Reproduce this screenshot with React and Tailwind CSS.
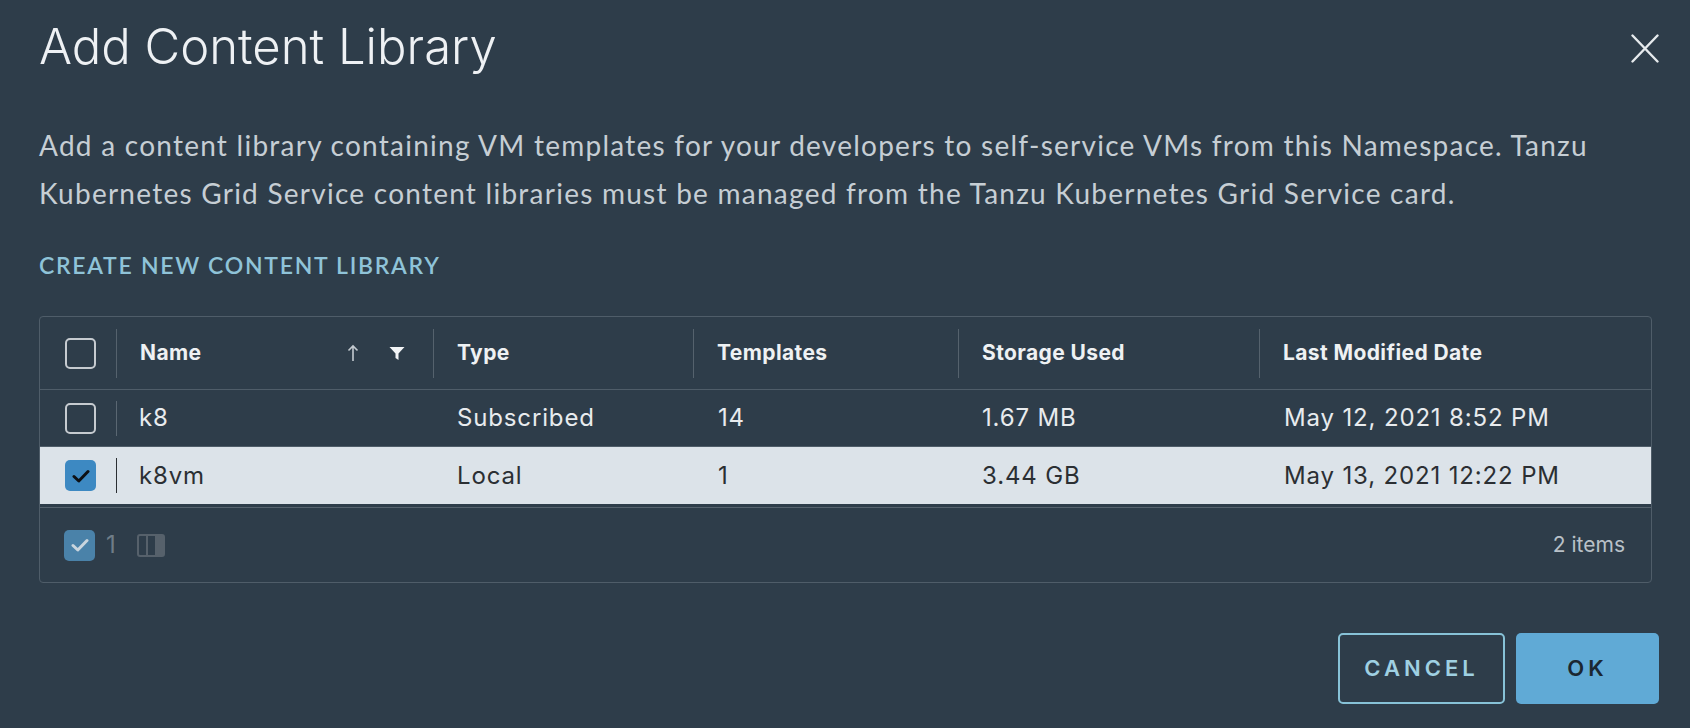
import React from "react";

const rows = [
  { name: "k8", type: "Subscribed", templates: "14", storage: "1.67 MB", modified: "May 12, 2021 8:52 PM", selected: false },
  { name: "k8vm", type: "Local", templates: "1", storage: "3.44 GB", modified: "May 13, 2021 12:22 PM", selected: true },
];

const cols = "grid grid-cols-[76px_317px_260px_265px_301px_1fr]";

function Checkbox({ checked, dim }) {
  if (!checked) {
    return <div className="w-[31px] h-[31px] rounded-[5px] border-2 border-[#c6cbd0]" />;
  }
  return (
    <div className={`w-[31px] h-[31px] rounded-[5px] flex items-center justify-center ${dim ? "bg-[#4a82a9]" : "bg-[#3d89c2]"}`}>
      <svg width="18" height="14" viewBox="0 0 18 14">
        <path d="M2 7.5 L6.8 12 L16 2.5" fill="none" stroke={dim ? "#c9d5de" : "#0d1014"} strokeWidth="3" strokeLinecap="round" strokeLinejoin="round" />
      </svg>
    </div>
  );
}

function HeadCell({ children, extra }) {
  return (
    <div className="flex items-center h-full">
      <div className="w-px h-[49px] bg-[#55626d]" />
      <span className="pl-[23px]">{children}</span>
      {extra}
    </div>
  );
}

export default function App() {
  return (
    <div className="w-[1690px] h-[728px] bg-[#2e3d4a] overflow-hidden pl-[39px] pr-[31px] font-['Inter',sans-serif]">
      {/* Title */}
      <div className="flex items-start justify-between pt-[22px]">
        <h1 className="text-[49px] leading-none font-light text-[#eef1f4]">Add Content Library</h1>
        <button className="mt-[12px] w-[28px] h-[29px]">
          <svg width="28" height="29" viewBox="0 0 28 29">
            <path d="M1.5 1.5 L26.5 27.5 M26.5 1.5 L1.5 27.5" stroke="#e6eaed" strokeWidth="2.4" strokeLinecap="round" />
          </svg>
        </button>
      </div>

      {/* Description */}
      <p className="mt-[50px] pr-[8px] font-['Lato',sans-serif] text-[28px] leading-[48px] tracking-[1.25px] text-[#c6ced4]">
        Add a content library containing VM templates for your developers to self-service VMs from this Namespace. Tanzu
        Kubernetes Grid Service content libraries must be managed from the Tanzu Kubernetes Grid Service card.
      </p>

      <div className="mt-[37px] font-['Lato',sans-serif] text-[23px] leading-none font-semibold text-[#8fc3d8] tracking-[1.7px]">
        CREATE NEW CONTENT LIBRARY
      </div>

      {/* Datagrid */}
      <div className="mt-[39px] w-[1613px] border border-[#4f5d69] rounded-[4px]">
        <div className={`${cols} h-[73px] items-center border-b border-[#4f5d69] text-[21px] font-bold text-[#eef1f3] tracking-[0.4px]`}>
          <div className="pl-[25px]"><Checkbox /></div>
          <HeadCell
            extra={
              <div className="ml-auto mr-[28px] flex items-center gap-[30px]">
                <svg width="12" height="18" viewBox="0 0 12 18">
                  <path d="M6 17 V2 M1.5 6.5 L6 2 L10.5 6.5" fill="none" stroke="#c3cad0" strokeWidth="1.6" />
                </svg>
                <svg width="16" height="16" viewBox="0 0 16 16">
                  <path d="M0.5 2 H15.5 L9.5 8.5 V15 L6.5 13 V8.5 Z" fill="#f2f4f6" />
                </svg>
              </div>
            }
          >
            Name
          </HeadCell>
          <HeadCell>Type</HeadCell>
          <HeadCell>Templates</HeadCell>
          <HeadCell>Storage Used</HeadCell>
          <HeadCell>Last Modified Date</HeadCell>
        </div>

        <div className="pb-[3px] border-b border-[#56636e]">
          {rows.map((r) => (
            <div
              key={r.name}
              className={`${cols} items-center text-[24px] tracking-[0.85px] ${
                r.selected ? "h-[57px] bg-[#dce3e9] text-[#2b2f33]" : "h-[57px] border-b border-[#4f5d69] text-[#e8ebee]"
              }`}
            >
              <div className="pl-[25px]"><Checkbox checked={r.selected} /></div>
              <div className="flex items-center">
                <div className={`w-px h-[35px] ${r.selected ? "bg-[#2b2f33]" : "bg-[#5a6772]"}`} />
                <span className="pl-[22px]">{r.name}</span>
              </div>
              <div className="pl-[24px]">{r.type}</div>
              <div className="pl-[25px]">{r.templates}</div>
              <div className="pl-[24px]">{r.storage}</div>
              <div className="pl-[25px]">{r.modified}</div>
            </div>
          ))}
        </div>

        <div className="h-[74px] flex items-center pl-[24px] pr-[26px]">
          <Checkbox checked dim />
          <span className="ml-[11px] text-[24px] text-[#6f7d88]">1</span>
          <svg className="ml-[21px]" width="28" height="23" viewBox="0 0 28 23">
            <rect x="1" y="1" width="26" height="21" rx="2" fill="none" stroke="#56616b" strokeWidth="2" />
            <path d="M10 1 V22" stroke="#56616b" strokeWidth="2" />
            <rect x="18" y="1" width="9" height="21" fill="#56616b" />
          </svg>
          <span className="ml-auto text-[21px] text-[#b9c1c8]">2 items</span>
        </div>
      </div>

      {/* Buttons */}
      <div className="mt-[50px] flex justify-end gap-[11px]">
        <button className="w-[167px] h-[71px] rounded-[5px] border-2 border-[#87c2d7] text-[#9fd0e2] text-[22px] font-semibold tracking-[4px]">
          CANCEL
        </button>
        <button className="w-[143px] h-[71px] rounded-[5px] bg-[#60aad6] text-[#1b2731] text-[22px] font-semibold tracking-[4px]">
          OK
        </button>
      </div>
    </div>
  );
}
